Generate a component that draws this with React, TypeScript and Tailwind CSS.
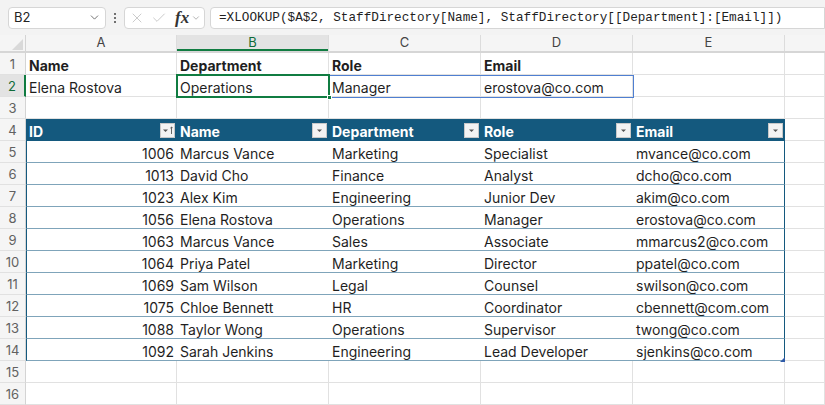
import { ChevronDown, X, Check } from "lucide-react";

const rows = [
    ["1006", "Marcus Vance", "Marketing", "Specialist", "mvance@co.com"],
    ["1013", "David Cho", "Finance", "Analyst", "dcho@co.com"],
    ["1023", "Alex Kim", "Engineering", "Junior Dev", "akim@co.com"],
    ["1056", "Elena Rostova", "Operations", "Manager", "erostova@co.com"],
    ["1063", "Marcus Vance", "Sales", "Associate", "mmarcus2@co.com"],
    ["1064", "Priya Patel", "Marketing", "Director", "ppatel@co.com"],
    ["1069", "Sam Wilson", "Legal", "Counsel", "swilson@co.com"],
    ["1075", "Chloe Bennett", "HR", "Coordinator", "cbennett@com.com"],
    ["1088", "Taylor Wong", "Operations", "Supervisor", "twong@co.com"],
    ["1092", "Sarah Jenkins", "Engineering", "Lead Developer", "sjenkins@co.com"],
];

const widths = ["w-[151px]", "w-[152px]", "w-[152px]", "w-[152px]", "w-[152px]"];

function RowHead({ n, active }: { n: number; active?: boolean }) {
    return (
        <div
            className={`w-[26px] shrink-0 h-full flex items-center justify-center pt-[3px] text-[13px] border-b border-[#e1e1e1] ${
                active ? "bg-[#e3e3e3] text-[#0f6b38] border-r-2 border-r-[#107c41]" : "bg-[#f5f5f5] text-[#616161] border-r border-r-[#d4d4d4]"
            }`}
        >
            {n}
        </div>
    );
}

function Cell({ w, children, className = "" }: { w: string; children?: React.ReactNode; className?: string }) {
    return (
        <div className={`${w} shrink-0 h-full flex items-center pt-[4px] px-[3px] border-r border-b border-[#e1e1e1] whitespace-nowrap overflow-hidden ${className}`}>
            {children}
        </div>
    );
}

function FilterBtn({ sorted }: { sorted?: boolean }) {
    return (
        <div className="ml-auto w-[15px] h-[15px] shrink-0 bg-[#f3f3f3] border border-[#c8c8c8] flex items-center justify-center gap-[1px]">
            <svg width="7" height="5" viewBox="0 0 7 5">
                <path d="M1 1.5h5L3.5 4z" fill="#555" />
            </svg>
            {sorted && (
                <svg width="3" height="9" viewBox="0 0 3 9">
                    <path d="M1.5 1v7M0.3 2.2L1.5 1l1.2 1.2" stroke="#555" strokeWidth="0.9" fill="none" />
                </svg>
            )}
        </div>
    );
}

export default function App() {
    const sheetFont = { fontFamily: "Inter, 'Liberation Sans', sans-serif" };
    return (
        <div className="w-[825px] h-[405px] overflow-hidden bg-white text-[#1f1f1f]" style={sheetFont}>
            {/* Formula bar */}
            <div className="h-[35px] bg-[#f3f3f3] flex items-center pl-[8px]">
                <div className="w-[98px] h-[22px] bg-white border border-[#d6d6d6] rounded-[4px] flex items-center pl-[5px] pr-[4px] text-[13px] text-[#242424]">
                    B2
                    <ChevronDown className="ml-auto w-[13px] h-[13px] text-[#555]" strokeWidth={1.5} />
                </div>
                <div className="w-[18px] flex flex-col items-center gap-[2px]">
                    <span className="w-[2px] h-[2px] bg-[#444] rounded-full" />
                    <span className="w-[2px] h-[2px] bg-[#444] rounded-full" />
                    <span className="w-[2px] h-[2px] bg-[#444] rounded-full" />
                </div>
                <div className="w-[81px] h-[22px] bg-white border border-[#d6d6d6] rounded-[4px] flex items-center pl-[4px]">
                    <X className="w-[16px] h-[16px] text-[#b8b8b8]" strokeWidth={1.1} />
                    <Check className="ml-[6px] w-[16px] h-[16px] text-[#b8b8b8]" strokeWidth={1.1} />
                    <span className="ml-[8px] text-[17px] italic font-bold text-[#333] leading-none" style={{ fontFamily: "'Liberation Serif', serif" }}>
                        fx
                    </span>
                    <ChevronDown className="ml-[2px] w-[10px] h-[10px] text-[#888]" strokeWidth={1.5} />
                </div>
                <div className="ml-[5px] flex-1 h-[22px] bg-white border border-[#d6d6d6] rounded-l-[4px] flex items-center pl-[8px] text-[12.7px] text-[#1f1f1f] whitespace-nowrap overflow-hidden" style={{ fontFamily: "'Liberation Mono', monospace" }}>
                    =XLOOKUP($A$2, StaffDirectory[Name], StaffDirectory[[Department]:[Email]])
                </div>
            </div>

            {/* Grid */}
            <div className="relative">
                {/* Column headers */}
                <div className="h-[18px] flex bg-[#f5f5f5] text-[13px] text-[#444] border-b-2 border-[#d6d6d6]">
                    <div className="w-[26px] shrink-0 h-full relative border-r border-[#d4d4d4]">
                        <svg className="absolute right-[2px] bottom-[1px]" width="11" height="11" viewBox="0 0 11 11">
                            <path d="M11 0V11H0z" fill="#d9d9d9" />
                        </svg>
                    </div>
                    {["A", "B", "C", "D", "E"].map((c, i) => (
                        <div
                            key={c}
                            className={`${widths[i]} shrink-0 h-full flex items-center justify-center border-r border-[#dcdcdc] ${
                                c === "B" ? "bg-[#e3e3e3] text-[#0f6b38] shadow-[inset_0_-2px_0_#107c41]" : ""
                            }`}
                        >
                            {c}
                        </div>
                    ))}
                    <div className="flex-1" />
                </div>

                {/* Row 1 */}
                <div className="h-[22px] flex text-[14px]">
                    <RowHead n={1} />
                    {["Name", "Department", "Role", "Email", ""].map((t, i) => (
                        <Cell key={i} w={widths[i]} className="font-bold">
                            {t}
                        </Cell>
                    ))}
                    <Cell w="flex-1" />
                </div>

                {/* Row 2 */}
                <div className="h-[22px] flex text-[14px]">
                    <RowHead n={2} active />
                    {["Elena Rostova", "Operations", "Manager", "erostova@co.com", ""].map((t, i) => (
                        <Cell key={i} w={widths[i]}>
                            {t}
                        </Cell>
                    ))}
                    <Cell w="flex-1" />
                </div>

                {/* Row 3 */}
                <div className="h-[22px] flex text-[14px]">
                    <RowHead n={3} />
                    {widths.map((w, i) => (
                        <Cell key={i} w={w} />
                    ))}
                    <Cell w="flex-1" />
                </div>

                {/* Row 4 - table header */}
                <div className="h-[22px] flex text-[14px]">
                    <RowHead n={4} />
                    {["ID", "Name", "Department", "Role", "Email"].map((t, i) => (
                        <div key={t} className={`${widths[i]} shrink-0 h-full flex items-center pl-[3px] pr-[2px] bg-[#14597e] text-white font-bold`}>
                            <span className="pt-[3px]">{t}</span>
                            <FilterBtn sorted={i === 0} />
                        </div>
                    ))}
                    <Cell w="flex-1" />
                </div>

                {/* Table body */}
                {rows.map((r, ri) => (
                    <div key={r[0]} className="h-[22px] flex text-[14px]">
                        <RowHead n={ri + 5} />
                        {r.map((t, i) => (
                            <div
                                key={i}
                                className={`${widths[i]} shrink-0 h-full flex items-center pt-[4px] px-[3px] border-b border-[#7fa4ba] whitespace-nowrap ${
                                    i === 0 ? "justify-end border-l border-l-[#14597e]" : ""
                                } ${i === 4 ? "border-r border-r-[#14597e]" : ""}`}
                            >
                                {t}
                            </div>
                        ))}
                        <Cell w="flex-1" />
                    </div>
                ))}

                {/* Rows 15, 16 */}
                {[15, 16].map((n) => (
                    <div key={n} className="h-[22px] flex text-[14px]">
                        <RowHead n={n} />
                        {widths.map((w, i) => (
                            <Cell key={i} w={w} />
                        ))}
                        <Cell w="flex-1" />
                    </div>
                ))}

                {/* Spill range outline B2:D2 */}
                <div className="absolute left-[177px] top-[40px] w-[457px] h-[23px] border border-[#4f7fd1] pointer-events-none" />
                {/* Active cell B2 */}
                <div className="absolute left-[176px] top-[39px] w-[154px] h-[24px] border-2 border-[#107c41] pointer-events-none" />
                <div className="absolute left-[327px] top-[60px] w-[5px] h-[5px] bg-[#107c41] border border-white pointer-events-none" />
                {/* Table resize handle */}
                <svg className="absolute left-[780px] top-[322px] pointer-events-none" width="5" height="5" viewBox="0 0 5 5">
                    <path d="M5 0V5H0z" fill="#2f5aa8" />
                </svg>
            </div>
        </div>
    );
}
